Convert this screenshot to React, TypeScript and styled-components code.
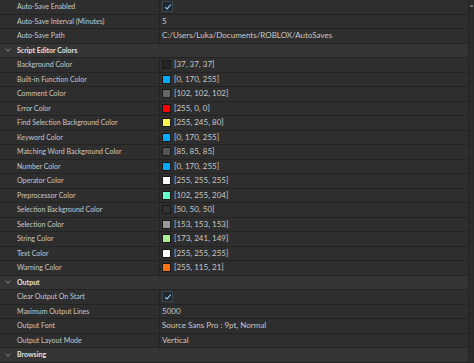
import React, { FC } from "react";
import styled, { createGlobalStyle } from "styled-components";

const GlobalStyle = createGlobalStyle`
  html, body {
    margin: 0;
    padding: 0;
    background: #2e2e2e;
    overflow: hidden;
  }
  body {
    font-family: Lato, "Open Sans", sans-serif;
  }
`;

type Item =
  | { kind: "header"; label: string }
  | { kind: "bool"; label: string; value: boolean }
  | { kind: "text"; label: string; value: string }
  | { kind: "color"; label: string; rgb: [number, number, number] };

const items: Item[] = [
  { kind: "bool", label: "Auto-Save Enabled", value: true },
  { kind: "text", label: "Auto-Save Interval (Minutes)", value: "5" },
  { kind: "text", label: "Auto-Save Path", value: "C:/Users/Luka/Documents/ROBLOX/AutoSaves" },
  { kind: "header", label: "Script Editor Colors" },
  { kind: "color", label: "Background Color", rgb: [37, 37, 37] },
  { kind: "color", label: "Built-in Function Color", rgb: [0, 170, 255] },
  { kind: "color", label: "Comment Color", rgb: [102, 102, 102] },
  { kind: "color", label: "Error Color", rgb: [255, 0, 0] },
  { kind: "color", label: "Find Selection Background Color", rgb: [255, 245, 80] },
  { kind: "color", label: "Keyword Color", rgb: [0, 170, 255] },
  { kind: "color", label: "Matching Word Background Color", rgb: [85, 85, 85] },
  { kind: "color", label: "Number Color", rgb: [0, 170, 255] },
  { kind: "color", label: "Operator Color", rgb: [255, 255, 255] },
  { kind: "color", label: "Preprocessor Color", rgb: [102, 255, 204] },
  { kind: "color", label: "Selection Background Color", rgb: [50, 50, 50] },
  { kind: "color", label: "Selection Color", rgb: [153, 153, 153] },
  { kind: "color", label: "String Color", rgb: [173, 241, 149] },
  { kind: "color", label: "Text Color", rgb: [255, 255, 255] },
  { kind: "color", label: "Warning Color", rgb: [255, 115, 21] },
  { kind: "header", label: "Output" },
  { kind: "bool", label: "Clear Output On Start", value: true },
  { kind: "text", label: "Maximum Output Lines", value: "5000" },
  { kind: "text", label: "Output Font", value: "Source Sans Pro : 9pt, Normal" },
  { kind: "text", label: "Output Layout Mode", value: "Vertical" },
  { kind: "header", label: "Browsing" },
];

const Panel = styled.div`
  display: flex;
  width: 474px;
  height: 363px;
  background: #2e2e2e;
  overflow: hidden;
`;

const List = styled.div`
  flex: 1;
  display: flex;
  flex-direction: column;
  min-width: 0;
`;

const Scrollbar = styled.div`
  width: 5px;
  background: #2b2b2b;
  border-left: 1px solid #242424;
  display: flex;
  flex-direction: column;
  padding-top: 5px;
`;

const Thumb = styled.div`
  height: 2px;
  margin: 0 1px;
  background: #6a6a6a;
`;

const Row = styled.div<{ $header?: boolean }>`
  flex: 0 0 14.5px;
  box-sizing: border-box;
  display: flex;
  align-items: stretch;
  border-bottom: 1px solid #232323;
  background: ${(p) => (p.$header ? "#353535" : "#2e2e2e")};
  font-size: 8px;
  line-height: 13px;
  color: #c8c8c8;
  white-space: nowrap;
`;

const NameCell = styled.div`
  width: 160px;
  box-sizing: border-box;
  padding-left: 17px;
  border-right: 1px solid #232323;
  font-size: 7px;
  overflow: hidden;
`;

const ValueCell = styled.div`
  flex: 1;
  display: flex;
  align-items: center;
  padding-left: 2px;
  gap: 3px;
  overflow: hidden;
`;

const HeaderLabel = styled.div`
  display: flex;
  align-items: center;
  font-weight: 700;
  font-size: 7px;
  color: #e0e0e0;
  padding-left: 5px;
`;

const Chevron = styled.svg`
  width: 6px;
  height: 6px;
  margin-right: 6px;
`;

const Swatch = styled.span<{ $c: string }>`
  width: 7px;
  height: 7px;
  background: ${(p) => p.$c};
  border: 1px solid #1a1a1a;
  flex: 0 0 auto;
`;

const Check = styled.span`
  width: 9px;
  height: 9px;
  background: #1f2730;
  border: 1px solid #3b4650;
  display: flex;
  align-items: center;
  justify-content: center;
`;

const PropRow: FC<{ item: Item }> = ({ item }) => {
  if (item.kind === "header") {
    return (
      <Row $header>
        <HeaderLabel>
          <Chevron viewBox="0 0 6 6">
            <path d="M0.5 1.8 L3 4.2 L5.5 1.8" stroke="#9a9a9a" strokeWidth="0.9" fill="none" />
          </Chevron>
          {item.label}
        </HeaderLabel>
      </Row>
    );
  }
  return (
    <Row>
      <NameCell>{item.label}</NameCell>
      <ValueCell>
        {item.kind === "bool" && (
          <Check>
            <svg width="8" height="8" viewBox="0 0 8 8">
              <path d="M1.2 4.2 L3.1 6 L6.8 1.6" stroke="#8fc4ee" strokeWidth="1.2" fill="none" />
            </svg>
          </Check>
        )}
        {item.kind === "text" && item.value}
        {item.kind === "color" && (
          <>
            <Swatch $c={`rgb(${item.rgb.join(",")})`} />
            {`[${item.rgb.join(", ")}]`}
          </>
        )}
      </ValueCell>
    </Row>
  );
};

export default function App() {
  return (
    <>
      <GlobalStyle />
      <Panel>
        <List>
          {items.map((item, i) => (
            <PropRow key={i} item={item} />
          ))}
        </List>
        <Scrollbar>
          <Thumb />
        </Scrollbar>
      </Panel>
    </>
  );
}
